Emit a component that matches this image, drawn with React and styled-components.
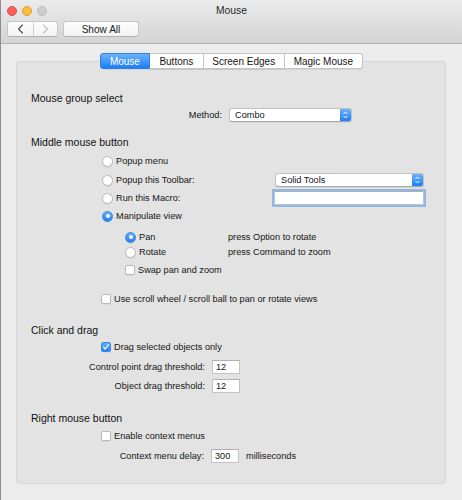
import React from 'react';
import styled, { createGlobalStyle } from 'styled-components';

const Global = createGlobalStyle`
  html, body { margin: 0; padding: 0; background: #ececec; }
  body { font-family: "Liberation Sans", Arial, sans-serif; color: #151515; }
  * { box-sizing: border-box; }
`;

const Window = styled.div`
  width: 462px;
  height: 500px;
  background: #ececec;
  border-left: 1px solid #8e8e8e;
  display: flex;
  flex-direction: column;
  overflow: hidden;
`;

const TitleBar = styled.div`
  height: 44px;
  background: linear-gradient(#ebebeb, #d4d4d4);
  border-bottom: 1px solid #b0b0b0;
  display: flex;
  flex-direction: column;
`;

const TitleRow = styled.div`
  height: 21px;
  display: grid;
  grid-template-columns: 1fr auto 1fr;
  align-items: center;
`;

const Lights = styled.div`
  display: flex;
  gap: 5px;
  padding-left: 6px;
`;

const Light = styled.span`
  width: 10px;
  height: 10px;
  border-radius: 50%;
  background: ${p => p.$color};
  border: 0.5px solid ${p => p.$edge};
`;

const Title = styled.div`
  font-size: 10.3px;
  color: #2a2a2a;
`;

const ToolRow = styled.div`
  display: flex;
  gap: 5px;
  padding-left: 6px;
`;

const Segmented = styled.div`
  display: flex;
  height: 16px;
  border: 1px solid #c6c6c6;
  border-bottom-color: #b2b2b2;
  border-radius: 3px;
  background: linear-gradient(#fdfdfd, #f3f3f3);
  overflow: hidden;
`;

const NavButton = styled.div`
  width: ${p => p.$w}px;
  display: flex;
  align-items: center;
  justify-content: center;
  border-left: ${p => (p.$divider ? '1px solid #d0d0d0' : 'none')};
`;

const ToolButton = styled.div`
  width: 76px;
  height: 16px;
  border: 1px solid #c6c6c6;
  border-bottom-color: #b2b2b2;
  border-radius: 3px;
  background: linear-gradient(#fdfdfd, #f3f3f3);
  display: flex;
  align-items: center;
  justify-content: center;
  font-size: 10.1px;
  color: #1a1a1a;
`;

const Content = styled.div`
  padding-top: 9px;
  display: flex;
  flex-direction: column;
`;

const Tabs = styled.div`
  display: flex;
  justify-content: center;
  position: relative;
  z-index: 1;
`;

const Tab = styled.div`
  height: 16px;
  padding: 0 ${p => p.$pad}px;
  display: flex;
  align-items: center;
  font-size: 10px;
  background: ${p => (p.$active ? 'linear-gradient(#6db2fb, #1b7ef6)' : '#ffffff')};
  color: ${p => (p.$active ? '#ffffff' : '#151515')};
  border: 1px solid ${p => (p.$active ? '#2f7fe0' : '#c4c4c4')};
  border-left-width: ${p => (p.$first ? 1 : 0)}px;
  border-radius: ${p => (p.$first ? '3px 0 0 3px' : p.$last ? '0 3px 3px 0' : '0')};
  box-shadow: 0 0.5px 0.5px rgba(0,0,0,0.12);
`;

const Panel = styled.div`
  margin: -8px 16px 0 15px;
  background: #e3e3e3;
  border: 1px solid #d7d7d7;
  border-radius: 4px;
  padding: 29px 21px 20px 14px;
  display: flex;
  flex-direction: column;
`;

const Heading = styled.div`
  height: 14px;
  display: flex;
  align-items: center;
  font-size: 10.5px;
  color: #111;
  margin-top: ${p => p.$mt || 0}px;
`;

const Row = styled.div`
  display: flex;
  align-items: center;
  height: 14px;
  margin-top: ${p => p.$mt || 0}px;
  padding-left: ${p => p.$indent || 0}px;
  gap: ${p => (p.$gap != null ? p.$gap : 3)}px;
  font-size: 9.2px;
  color: #151515;
  white-space: nowrap;
`;

const Label = styled.span`
  width: ${p => (p.$width ? `${p.$width}px` : 'auto')};
  flex-shrink: 0;
  text-align: ${p => (p.$right ? 'right' : 'left')};
`;

const RadioDot = styled.span`
  width: 11px;
  height: 11px;
  border-radius: 50%;
  flex-shrink: 0;
  display: flex;
  align-items: center;
  justify-content: center;
  background: ${p => (p.$checked ? 'linear-gradient(#69aefa, #1f80f7)' : '#ffffff')};
  border: 1px solid ${p => (p.$checked ? '#3a86e4' : '#b9b9b9')};
  box-shadow: 0 0.5px 0.5px rgba(0,0,0,0.1);
  &::after {
    content: '';
    display: ${p => (p.$checked ? 'block' : 'none')};
    width: 4px;
    height: 4px;
    border-radius: 50%;
    background: #fff;
  }
`;

const Box = styled.span`
  width: 10px;
  height: 10px;
  border-radius: 2px;
  flex-shrink: 0;
  display: flex;
  align-items: center;
  justify-content: center;
  background: ${p => (p.$checked ? 'linear-gradient(#69aefa, #1f80f7)' : '#ffffff')};
  border: 1px solid ${p => (p.$checked ? '#3a86e4' : '#b9b9b9')};
  box-shadow: 0 0.5px 0.5px rgba(0,0,0,0.1);
`;

const Popup = styled.div`
  width: ${p => p.$w}px;
  height: 14px;
  margin-left: ${p => (p.$push ? 'auto' : '0')};
  background: #ffffff;
  border: 0.5px solid #c2c2c2;
  border-bottom-color: #aaaaaa;
  border-radius: 3px;
  display: flex;
  align-items: center;
  font-size: 9.2px;
  box-shadow: 0 0.5px 0.5px rgba(0,0,0,0.12);
  overflow: hidden;
`;

const PopupText = styled.span`
  flex: 1;
  padding-left: 5px;
`;

const Stepper = styled.span`
  width: 11px;
  height: 100%;
  background: linear-gradient(#6db2fb, #1b7ef6);
  display: flex;
  align-items: center;
  justify-content: center;
`;

const TextField = styled.div`
  width: ${p => p.$w}px;
  height: ${p => p.$h || 14}px;
  margin-left: ${p => (p.$push ? 'auto' : '0')};
  background: #ffffff;
  border: 1px solid #c3c3c3;
  border-top-color: #b0b0b0;
  display: flex;
  align-items: center;
  padding-left: 3px;
  font-size: 9.2px;
  box-shadow: ${p => (p.$focus ? '0 0 0 2px #8db8ec' : 'none')};
`;

const Chevron = ({ dir, color }) => (
  <svg width="7" height="10" viewBox="0 0 7 10">
    <polyline
      points={dir === 'left' ? '5.5,1 1.5,5 5.5,9' : '1.5,1 5.5,5 1.5,9'}
      fill="none"
      stroke={color}
      strokeWidth="1.1"
      strokeLinecap="round"
      strokeLinejoin="round"
    />
  </svg>
);

const StepIcon = () => (
  <svg width="7" height="10" viewBox="0 0 7 10">
    <polyline points="1.5,4 3.5,2 5.5,4" fill="none" stroke="#fff" strokeWidth="1" />
    <polyline points="1.5,6 3.5,8 5.5,6" fill="none" stroke="#fff" strokeWidth="1" />
  </svg>
);

const Check = () => (
  <svg width="8" height="8" viewBox="0 0 8 8">
    <polyline points="1.5,4.2 3.2,6 6.6,1.6" fill="none" stroke="#fff" strokeWidth="1.2" strokeLinecap="round" strokeLinejoin="round" />
  </svg>
);

const Radio = ({ checked, children, indent, mt, width }) => (
  <Row $indent={indent} $mt={mt}>
    <RadioDot $checked={checked} />
    <Label $width={width}>{children}</Label>
  </Row>
);

export default function App() {
  return (
    <>
      <Global />
      <Window>
        <TitleBar>
          <TitleRow>
            <Lights>
              <Light $color="#fc605c" $edge="#de4a44" />
              <Light $color="#fdbc40" $edge="#de9f34" />
              <Light $color="#cdcdcd" $edge="#bcbcbc" />
            </Lights>
            <Title>Mouse</Title>
            <span />
          </TitleRow>
          <ToolRow>
            <Segmented>
              <NavButton $w={25}>
                <Chevron dir="left" color="#4a4a4a" />
              </NavButton>
              <NavButton $w={24} $divider>
                <Chevron dir="right" color="#c2c2c2" />
              </NavButton>
            </Segmented>
            <ToolButton>Show All</ToolButton>
          </ToolRow>
        </TitleBar>

        <Content>
          <Tabs>
            <Tab $active $first $pad={9}>Mouse</Tab>
            <Tab $pad={9.5}>Buttons</Tab>
            <Tab $pad={8.5}>Screen Edges</Tab>
            <Tab $last $pad={9}>Magic Mouse</Tab>
          </Tabs>

          <Panel>
            <Heading>Mouse group select</Heading>
            <Row $mt={3} $gap={7}>
              <Label $width={191} $right>Method:</Label>
              <Popup $w={123}>
                <PopupText>Combo</PopupText>
                <Stepper><StepIcon /></Stepper>
              </Popup>
            </Row>

            <Heading $mt={13}>Middle mouse button</Heading>
            <Radio indent={71} mt={5}>Popup menu</Radio>
            <Row $indent={71} $mt={5}>
              <RadioDot />
              <Label>Popup this Toolbar:</Label>
              <Popup $w={149} $push>
                <PopupText>Solid Tools</PopupText>
                <Stepper><StepIcon /></Stepper>
              </Popup>
            </Row>
            <Row $indent={71} $mt={4}>
              <RadioDot />
              <Label>Run this Macro:</Label>
              <TextField $w={150} $h={14} $push $focus />
            </Row>
            <Radio indent={71} mt={4} checked>Manipulate view</Radio>

            <Row $indent={94} $mt={7}>
              <RadioDot $checked />
              <Label $width={86}>Pan</Label>
              <Label>press Option to rotate</Label>
            </Row>
            <Row $indent={94} $mt={1}>
              <RadioDot />
              <Label $width={86}>Rotate</Label>
              <Label>press Command to zoom</Label>
            </Row>
            <Row $indent={94} $mt={4}>
              <Box />
              <Label>Swap pan and zoom</Label>
            </Row>
            <Row $indent={70} $mt={15}>
              <Box />
              <Label>Use scroll wheel / scroll ball to pan or rotate views</Label>
            </Row>

            <Heading $mt={17}>Click and drag</Heading>
            <Row $indent={70} $mt={3}>
              <Box $checked><Check /></Box>
              <Label>Drag selected objects only</Label>
            </Row>
            <Row $mt={6} $gap={7}>
              <Label $width={174} $right>Control point drag threshold:</Label>
              <TextField $w={28} $h={14}>12</TextField>
            </Row>
            <Row $mt={5} $gap={7}>
              <Label $width={174} $right>Object drag threshold:</Label>
              <TextField $w={28} $h={14}>12</TextField>
            </Row>

            <Heading $mt={18}>Right mouse button</Heading>
            <Row $indent={70} $mt={4}>
              <Box />
              <Label>Enable context menus</Label>
            </Row>
            <Row $mt={6} $gap={7}>
              <Label $width={173} $right>Context menu delay:</Label>
              <TextField $w={28} $h={14}>300</TextField>
              <Label>milliseconds</Label>
            </Row>
          </Panel>
        </Content>
      </Window>
    </>
  );
}
